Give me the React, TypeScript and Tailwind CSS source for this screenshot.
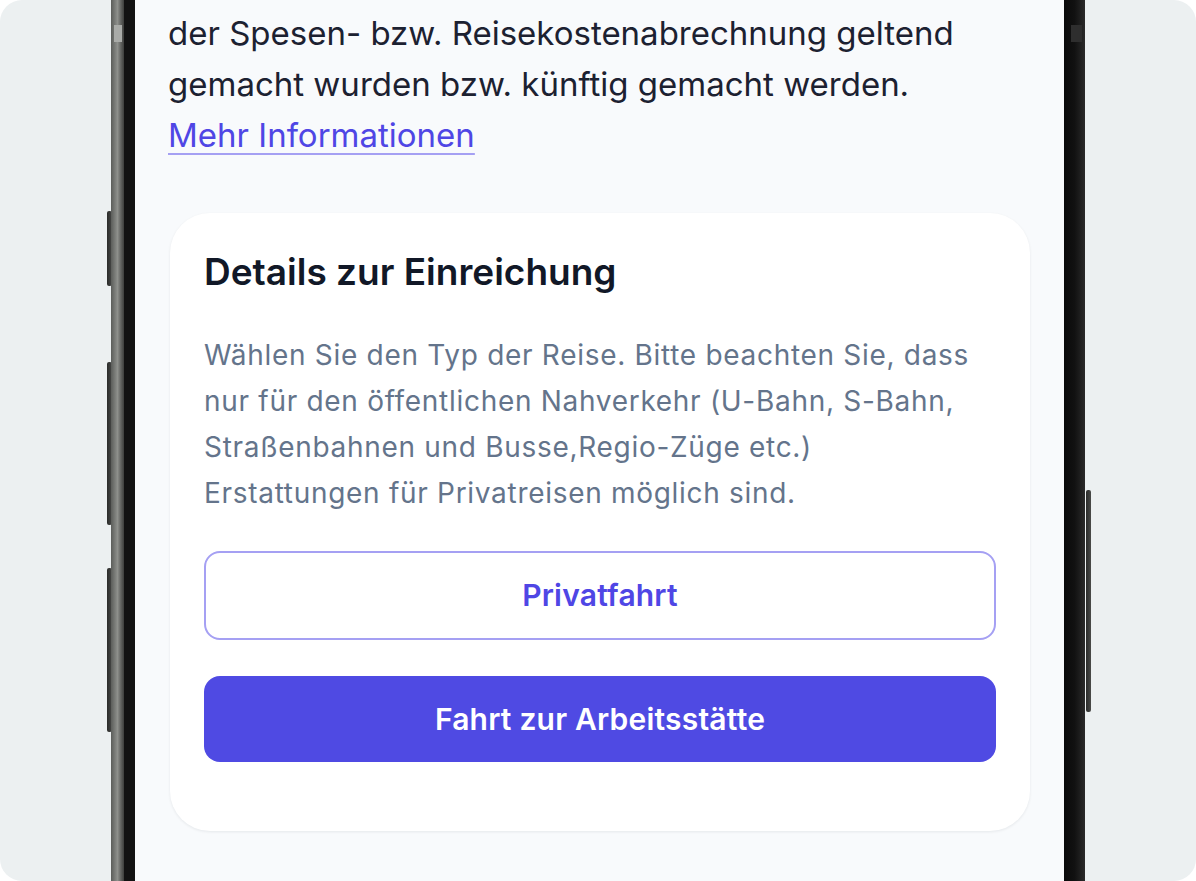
import React from "react";

const font = { fontFamily: "Inter, 'Noto Sans', sans-serif" };

function SideButton({ className }: { className: string }) {
  return (
    <div
      className={`absolute w-[5px] rounded-[2px] bg-gradient-to-r from-[#2a2b2a] to-[#4a4b49] ${className}`}
    />
  );
}

export default function App() {
  return (
    <div className="w-[1196px] h-[881px] bg-white" style={font}>
      <div className="h-full rounded-[22px] bg-[#ecf0f1] overflow-hidden flex justify-center">
        <div className="relative flex h-full">
          {/* Seitentasten */}
          <SideButton className="-left-[4px] top-[211px] h-[75px]" />
          <SideButton className="-left-[4px] top-[362px] h-[163px]" />
          <SideButton className="-left-[4px] top-[568px] h-[164px]" />
          <SideButton className="-right-[6px] top-[490px] h-[222px]" />

          {/* Rahmen links */}
          <div className="relative w-[13px] h-full bg-gradient-to-r from-[#5b5d5a] via-[#8e908c] to-[#3d3e3c]">
            <div className="absolute left-[3px] top-[25px] w-[8px] h-[17px] bg-[#a9aba8]" />
          </div>
          <div className="w-[11px] h-full bg-[#121212]" />

          {/* Bildschirm */}
          <div className="w-[929px] h-full bg-[#f8fafc] pl-[35px] pr-[34px] pt-[8px] overflow-hidden">
            <p className="-ml-[2px] text-[33px] leading-[51px] text-[#1c2131]">
              der Spesen- bzw. Reisekostenabrechnung geltend gemacht wurden bzw.
              künftig gemacht werden.
              <br />
              <a className="text-[#4f46e5] underline decoration-[#a5a0f3] decoration-2 underline-offset-[6px]">
                Mehr Informationen
              </a>
            </p>

            <div className="mt-[52px] bg-white rounded-[40px] shadow-[0_1px_3px_rgba(15,23,42,0.08)] px-[34px] pt-[37px] pb-[69px]">
              <h2 className="text-[37px] leading-[44px] font-semibold text-[#111827]">
                Details zur Einreichung
              </h2>
              <p className="mt-[38px] text-[28px] leading-[46px] tracking-[0.7px] text-[#64748b]">
                Wählen Sie den Typ der Reise. Bitte beachten Sie, dass nur für
                den öffentlichen Nahverkehr (U-Bahn, S-Bahn, Straßenbahnen und
                Busse,Regio-Züge etc.) Erstattungen für Privatreisen möglich sind.
              </p>

              <div className="mt-[35px] flex flex-col gap-[36px]">
                <button className="h-[89px] w-full rounded-[16px] border-2 border-[#a5a0f3] bg-white text-[30px] tracking-[0.2px] font-semibold text-[#4f46e5]">
                  Privatfahrt
                </button>
                <button className="h-[86px] w-full rounded-[16px] bg-[#4f4ae3] text-[30px] tracking-[0.2px] font-semibold text-white">
                  Fahrt zur Arbeitsstätte
                </button>
              </div>
            </div>
          </div>

          {/* Rahmen rechts */}
          <div className="relative w-[21px] h-full bg-gradient-to-r from-[#0a0a0a] via-[#111111] to-[#2a2a2a]">
            <div className="absolute left-[7px] top-[25px] w-[11px] h-[17px] bg-[#2e2e2e]" />
          </div>
        </div>
      </div>
    </div>
  );
}
